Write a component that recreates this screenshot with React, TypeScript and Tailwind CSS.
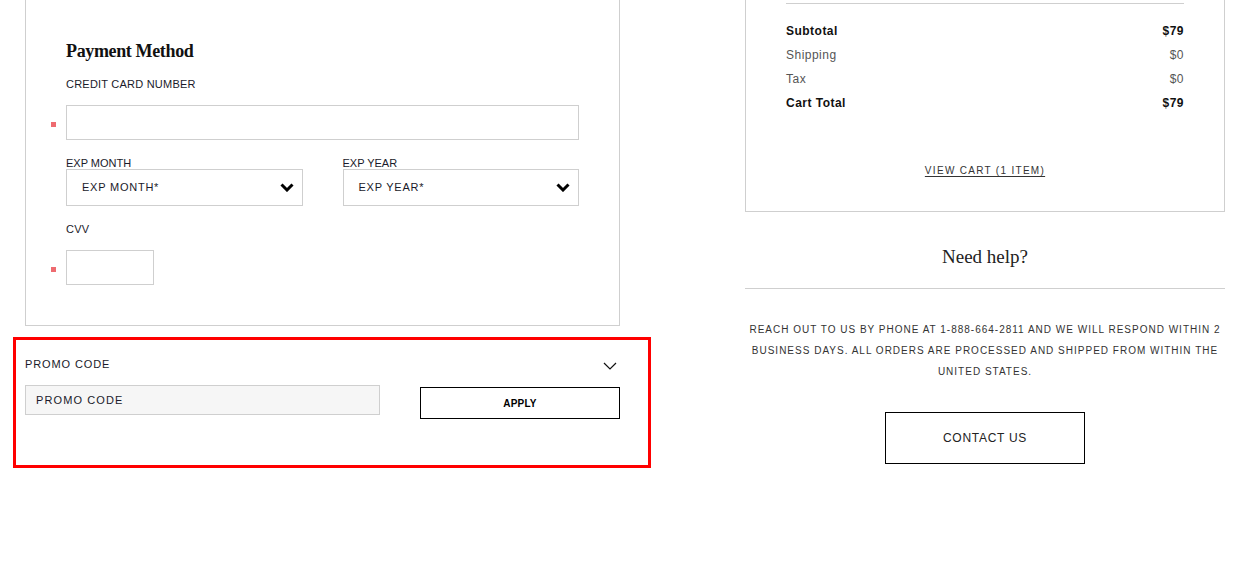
const sans = { fontFamily: '"Liberation Sans", Arial, sans-serif' };
const serif = { fontFamily: '"Liberation Serif", "Times New Roman", serif' };

function Chevron({ thin }: { thin?: boolean }) {
  if (thin) {
    return (
      <svg width="14" height="8" viewBox="0 0 14 8" fill="none" className="mt-[3px]">
        <polyline points="1,1 7,7 13,1" stroke="#111" strokeWidth="1.2" />
      </svg>
    );
  }
  return (
    <svg width="14" height="9" viewBox="0 0 14 9" fill="none">
      <polyline points="1.5,1.5 7,7 12.5,1.5" stroke="#000" strokeWidth="3" />
    </svg>
  );
}

function Required() {
  return <span className="absolute -left-[15px] top-[17px] h-[5px] w-[5px] bg-[#ee6b70]" />;
}

function SelectBox({ label }: { label: string }) {
  return (
    <div className="flex h-[37px] items-center justify-between border border-[#cfcfcf] pl-[15px] pr-[8px]">
      <span className="text-[11px] tracking-[0.07em] text-[#1a1a2a]">{label}</span>
      <Chevron />
    </div>
  );
}

function Row({ label, value, bold }: { label: string; value: string; bold?: boolean }) {
  return (
    <div
      className={`flex h-[24px] items-center justify-between text-[12px] tracking-[0.04em] ${
        bold ? "font-bold text-[#111]" : "text-[#555]"
      }`}
    >
      <span>{label}</span>
      <span>{value}</span>
    </div>
  );
}

export default function App() {
  return (
    <div className="flex min-h-[567px] w-[1259px] bg-white pl-[25px]" style={sans}>
      {/* left column */}
      <div className="w-[595px]">
        <div className="border-x border-b border-[#cfcfcf] px-[40px] pb-[40px] pt-[39px]">
          <h2 className="text-[18px] font-bold leading-[24px] tracking-[-0.02em] text-[#111]" style={serif}>
            Payment Method
          </h2>
          <div className="mt-[14px] text-[11px] leading-[14px] tracking-[0.02em] text-[#1a1a2a]">
            CREDIT CARD NUMBER
          </div>
          <div className="relative mt-[14px]">
            <Required />
            <input className="block h-[35px] w-full border border-[#cfcfcf] outline-none" />
          </div>
          <div className="mt-[17px] grid grid-cols-2 gap-[40px]">
            <div>
              <div className="text-[11px] leading-[12px] tracking-[0em] text-[#1a1a2a]">EXP MONTH</div>
              <SelectBox label="EXP MONTH*" />
            </div>
            <div>
              <div className="text-[11px] leading-[12px] tracking-[0em] text-[#1a1a2a]">EXP YEAR</div>
              <SelectBox label="EXP YEAR*" />
            </div>
          </div>
          <div className="mt-[17px] text-[11px] leading-[12px] tracking-[0.02em] text-[#1a1a2a]">CVV</div>
          <div className="relative mt-[15px] w-[88px]">
            <Required />
            <input className="block h-[35px] w-[88px] border border-[#cfcfcf] outline-none" />
          </div>
        </div>

        <div className="-ml-[12px] mt-[11px] h-[131px] w-[638px] border-[3px] border-[#ff0000] pl-[9px] pr-[28px] pt-[17px]">
          <div className="flex items-center justify-between pr-[3px]">
            <span className="text-[11px] leading-[14px] tracking-[0.08em] text-[#1a1a2a]">PROMO CODE</span>
            <Chevron thin />
          </div>
          <div className="mt-[14px] flex items-start justify-between">
            <div className="flex h-[30px] w-[355px] items-center border border-[#cfcfcf] bg-[#f6f6f6] pl-[10px] text-[11px] tracking-[0.1em] text-[#1a1a2a]">
              PROMO CODE
            </div>
            <button className="mt-[2px] h-[32px] w-[200px] border border-black text-[10px] font-bold tracking-[0.02em] text-black">
              APPLY
            </button>
          </div>
        </div>
      </div>

      {/* right column */}
      <div className="ml-[125px] w-[480px]">
        <div className="border-x border-b border-[#cfcfcf] px-[40px] pb-[33px] pt-[3px]">
          <div className="border-t border-[#cfcfcf]" />
          <div className="mt-[15px]">
            <Row label="Subtotal" value="$79" bold />
            <Row label="Shipping" value="$0" />
            <Row label="Tax" value="$0" />
            <Row label="Cart Total" value="$79" bold />
          </div>
          <div className="mt-[47px] text-center leading-[14px]">
            <a className="text-[10px] tracking-[0.13em] text-[#333] underline underline-offset-2">VIEW CART (1 ITEM)</a>
          </div>
        </div>

        <h3 className="mt-[33px] text-center text-[19px] leading-[24px] text-[#222]" style={serif}>
          Need help?
        </h3>
        <div className="mt-[19px] border-t border-[#cfcfcf]" />
        <p className="mt-[30px] text-center text-[10px] leading-[21px] tracking-[0.1em] text-[#333]">
          REACH OUT TO US BY PHONE AT 1-888-664-2811 AND WE WILL RESPOND WITHIN 2 BUSINESS DAYS. ALL ORDERS ARE
          PROCESSED AND SHIPPED FROM WITHIN THE UNITED STATES.
        </p>
        <div className="mt-[30px] flex justify-center">
          <button className="h-[52px] w-[200px] border border-black text-[12px] tracking-[0.06em] text-[#222]">
            CONTACT US
          </button>
        </div>
      </div>
    </div>
  );
}
